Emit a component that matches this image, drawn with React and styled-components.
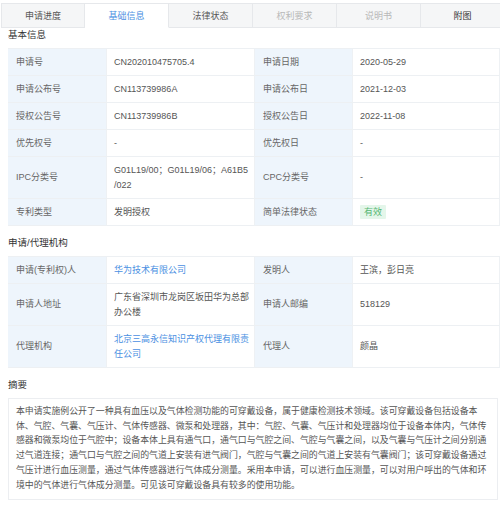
import styled, { createGlobalStyle } from "styled-components";

const GlobalStyle = createGlobalStyle`
  html, body {
    margin: 0;
    padding: 0;
    background: #fff;
    overflow: hidden;
  }
  body {
    font-family: "Liberation Sans", "Noto Sans CJK SC", sans-serif;
    color: #555;
  }
`;

const tabs = [
  { name: "申请进度", tone: "normal" },
  { name: "基础信息", tone: "active" },
  { name: "法律状态", tone: "normal" },
  { name: "权利要求", tone: "muted" },
  { name: "说明书", tone: "muted" },
  { name: "附图", tone: "dark" },
];

// \u200B lets the IPC list break between the class and its group, as on the site
const basicRows = [
  ["申请号", "CN202010475705.4", "申请日期", "2020-05-29"],
  ["申请公布号", "CN113739986A", "申请公布日", "2021-12-03"],
  ["授权公告号", "CN113739986B", "授权公告日", "2022-11-08"],
  ["优先权号", "-", "优先权日", "-"],
  ["IPC分类号", "G01L19/00；G01L19/06；A61B5\u200B/022", "CPC分类号", "-"],
  ["专利类型", "发明授权", "简单法律状态", { tag: "有效" }],
];

const agencyRows = [
  ["申请(专利权)人", { link: "华为技术有限公司" }, "发明人", "王滨，彭日亮"],
  ["申请人地址", "广东省深圳市龙岗区坂田华为总部办公楼", "申请人邮编", "518129"],
  ["代理机构", { link: "北京三高永信知识产权代理有限责任公司" }, "代理人", "颜晶"],
];

const abstractLines = [
  "本申请实施例公开了一种具有血压以及气体检测功能的可穿戴设备，属于健康检测技术领域。该可穿戴设备包括设备本",
  "体、气腔、气囊、气压计、气体传感器、微泵和处理器，其中：气腔、气囊、气压计和处理器均位于设备本体内，气体传",
  "感器和微泵均位于气腔中；设备本体上具有通气口，通气口与气腔之间、气腔与气囊之间，以及气囊与气压计之间分别通",
  "过气道连接；通气口与气腔之间的气道上安装有进气阀门，气腔与气囊之间的气道上安装有气囊阀门；该可穿戴设备通过",
  "气压计进行血压测量，通过气体传感器进行气体成分测量。采用本申请，可以进行血压测量，可以对用户呼出的气体和环",
  "境中的气体进行气体成分测量。可见该可穿戴设备具有较多的使用功能。",
];

const tabColors = {
  normal: "#555",
  active: "#4a8fe2",
  muted: "#b8b8b8",
  dark: "#333",
};

function Value({ value }) {
  if (typeof value === "object" && value.link) return <Link>{value.link}</Link>;
  if (typeof value === "object" && value.tag) return <Tag>{value.tag}</Tag>;
  return value;
}

function InfoTable({ rows }) {
  return (
    <Grid>
      {rows.map((row, i) => (
        <Row key={i}>
          <LabelCell>{row[0]}</LabelCell>
          <ValueCell>
            <Value value={row[1]} />
          </ValueCell>
          <LabelCell>{row[2]}</LabelCell>
          <ValueCell>
            <Value value={row[3]} />
          </ValueCell>
        </Row>
      ))}
    </Grid>
  );
}

export default function App() {
  return (
    <>
      <GlobalStyle />
      <Page>
        <TabBar>
          {tabs.map((t) => (
            <Tab key={t.name} $tone={t.tone}>
              {t.name}
            </Tab>
          ))}
        </TabBar>
        <Content>
          <SectionTitle $top={0}>基本信息</SectionTitle>
          <InfoTable rows={basicRows} />
          <SectionTitle $top={10}>申请/代理机构</SectionTitle>
          <InfoTable rows={agencyRows} />
          <SectionTitle $top={10}>摘要</SectionTitle>
          <AbstractBox>
            {abstractLines.map((l, i) => (
              <AbstractLine key={i}>{l}</AbstractLine>
            ))}
          </AbstractBox>
        </Content>
      </Page>
    </>
  );
}

const Page = styled.div`
  width: 500px;
  height: 506px;
  overflow: hidden;
  padding-top: 3px;
  box-sizing: border-box;
`;

const TabBar = styled.div`
  display: flex;
  padding-left: 1px;
  height: 25px;
`;

const Tab = styled.div`
  flex: 0 0 84px;
  box-sizing: border-box;
  display: flex;
  align-items: center;
  justify-content: center;
  font-size: 9px;
  color: ${(p) => tabColors[p.$tone]};
  background: ${(p) => (p.$tone === "active" ? "#fff" : "#f5f6f7")};
  border: 1px solid #e6e8eb;
  border-left: none;
  border-bottom: ${(p) => (p.$tone === "active" ? "1px solid #fff" : "1px solid #e6e8eb")};

  &:first-child {
    border-left: 1px solid #e6e8eb;
  }
`;

const Content = styled.div`
  padding-left: 8px;
`;

const SectionTitle = styled.div`
  margin-top: ${(p) => p.$top}px;
  margin-bottom: 6px;
  line-height: 14px;
  font-size: 9.5px;
  color: #333;
`;

const Grid = styled.div`
  display: grid;
  grid-template-columns: 99px 148px 98px 147px;
  border-top: 1px solid #edf0f3;
  font-size: 9px;
`;

const Row = styled.div`
  display: contents;
`;

const Cell = styled.div`
  box-sizing: border-box;
  min-height: 27px;
  padding: 5.5px 0 5.5px 7px;
  line-height: 15px;
  display: flex;
  align-items: center;
  border-bottom: 1px solid #edf0f3;
  border-right: 1px solid #eef1f4;
`;

const LabelCell = styled(Cell)`
  background: #eef5fc;
  color: #666;
  padding-left: 8px;
`;

const ValueCell = styled(Cell)`
  background: #fff;
  color: #555;
`;

const Link = styled.span`
  color: #4a8fe2;
`;

const Tag = styled.span`
  display: inline-block;
  padding: 0 4px;
  line-height: 14px;
  background: #e4f6ea;
  color: #55b772;
  border-radius: 1px;
`;

const AbstractBox = styled.div`
  width: 490px;
  box-sizing: border-box;
  border: 1px solid #eceef1;
  padding: 5px 0 7px 7px;
  font-size: 8.9px;
  line-height: 14.7px;
  color: #555;
`;

const AbstractLine = styled.div`
  white-space: nowrap;
`;
